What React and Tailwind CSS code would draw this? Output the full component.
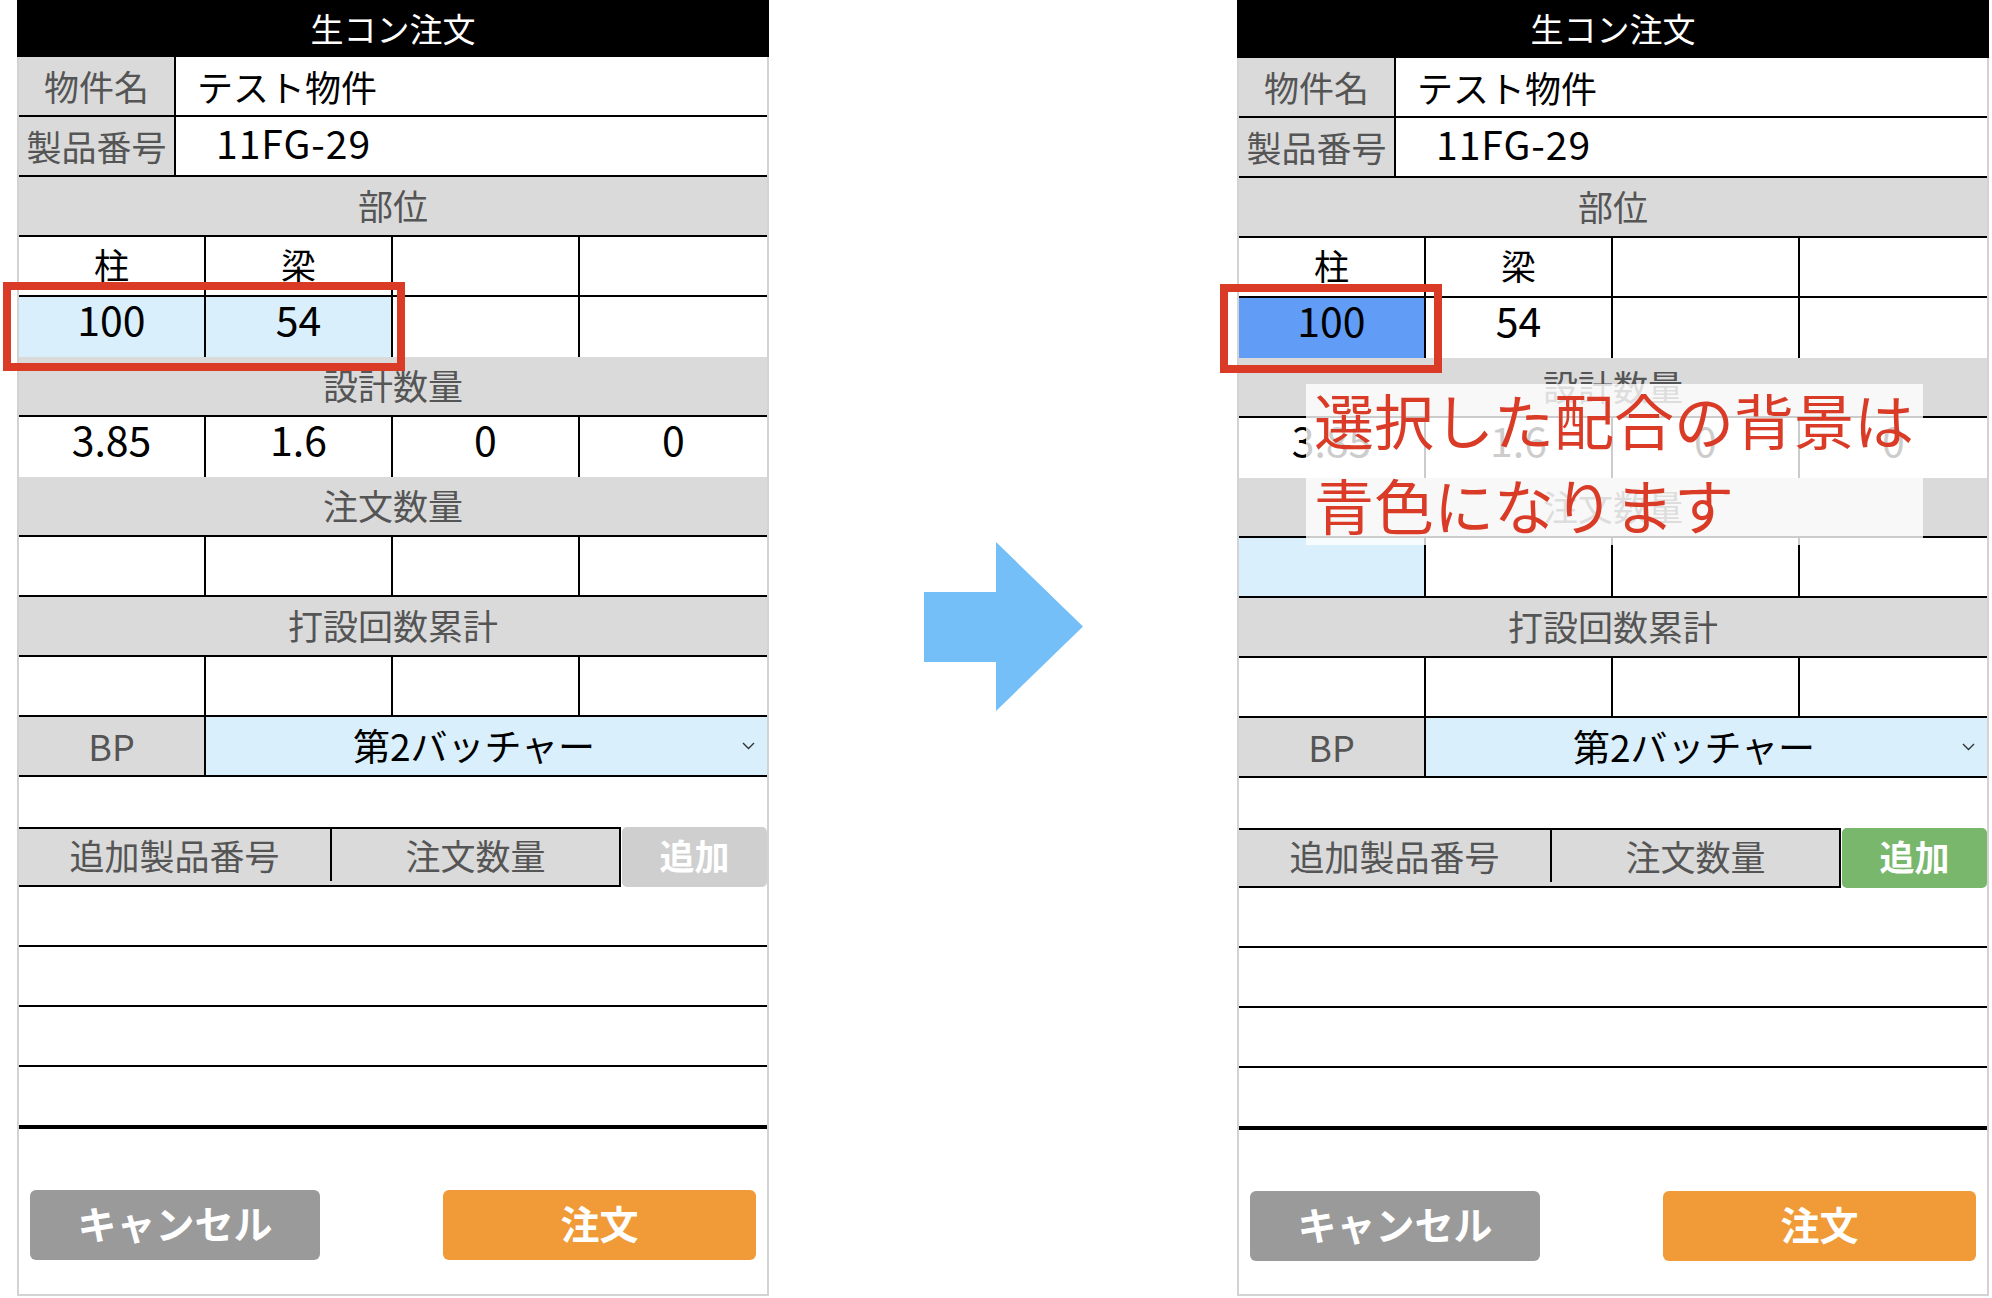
import React from "react";

const font = "font-['Noto_Sans_CJK_JP','Noto_Sans',sans-serif]";
const gray = "bg-[#dadada]";
const lightBlue = "bg-[#d9effc]";

function InfoRow({ label, value, valuePad }) {
  return (
    <div className="flex h-[60px] border-b-2 border-black">
      <div className={`flex w-[157px] items-center justify-center border-r-2 border-black ${gray} text-[35px] text-[#555]`}>
        {label}
      </div>
      <div className={`flex flex-1 items-center bg-white text-black ${valuePad}`}>{value}</div>
    </div>
  );
}

function SectionHeader({ title }) {
  return (
    <div className={`flex h-[60px] items-center justify-center border-b-2 border-black ${gray} pb-[2px] text-[35px] text-[#555]`}>
      {title}
    </div>
  );
}

function GridRow({ cells = [], bgs = [], textSize = "text-[41px]", shift = "-top-[9px]" }) {
  return (
    <div className="grid h-[60px] grid-cols-4 border-b-2 border-black">
      {[0, 1, 2, 3].map((i) => (
        <div
          key={i}
          className={`flex items-center justify-center text-black ${textSize} ${bgs[i] || "bg-white"} ${
            i < 3 ? "border-r-2 border-black" : ""
          }`}
        >
          {cells[i] && <span className={`relative ${shift}`}>{cells[i]}</span>}
        </div>
      ))}
    </div>
  );
}

function Panel({ after }) {
  return (
    <div className={`flex h-[1296px] w-[752px] flex-col ${font}`}>
      <div
        className={`flex ${after ? "h-[58px]" : "h-[57px]"} items-center justify-center bg-black text-[33px] text-white`}
      >
        生コン注文
      </div>
      <div className="flex flex-1 flex-col border-x-2 border-b-2 border-[#d3d3d3] bg-white">
        <InfoRow label="物件名" value={<span className="text-[36px]">テスト物件</span>} valuePad="pl-[21px]" />
        <InfoRow
          label="製品番号"
          value={<span className="text-[39px] tracking-[1px]">11FG-29</span>}
          valuePad="pl-[40px] pb-[7px]"
        />
        <SectionHeader title="部位" />
        <GridRow cells={["柱", "梁"]} textSize="text-[35px]" shift="-top-[2px]" />
        <GridRow
          cells={["100", "54"]}
          bgs={after ? ["bg-[#619cf7]"] : [lightBlue, lightBlue]}
        />
        <SectionHeader title="設計数量" />
        <GridRow cells={["3.85", "1.6", "0", "0"]} />
        <SectionHeader title="注文数量" />
        <GridRow bgs={after ? [lightBlue] : []} />
        <SectionHeader title="打設回数累計" />
        <GridRow />
        <div className="flex h-[60px] border-b-2 border-black">
          <div className={`flex w-[187px] items-center justify-center border-r-2 border-black ${gray} pb-[3px] text-[36px] text-[#555]`}>
            BP
          </div>
          <div className={`flex flex-1 items-center ${lightBlue}`}>
            <span className="flex-1 text-center text-[37px] text-black">第2バッチャー</span>
            <svg className="mr-[12px]" width="13" height="8" viewBox="0 0 13 8">
              <polyline points="1,1 6.5,6.5 12,1" fill="none" stroke="#333" strokeWidth="1.4" />
            </svg>
          </div>
        </div>

        <div className="h-[50px]" />
        <div className="flex h-[60px]">
          <div className={`flex w-[602px] border-y-2 border-r-2 border-black ${gray} pb-[4px] text-[35px] text-[#555]`}>
            <div className="flex w-[313px] items-center justify-center border-r-2 border-black">追加製品番号</div>
            <div className="flex flex-1 items-center justify-center">注文数量</div>
          </div>
          <div
            className={`ml-[1px] flex flex-1 items-center justify-center rounded-[5px] pb-[3px] text-[35px] font-bold text-white ${
              after ? "bg-[#78b76c]" : "bg-[#cfcfcf]"
            }`}
          >
            追加
          </div>
        </div>
        <div className="h-[60px] border-b-2 border-black" />
        <div className="h-[60px] border-b-2 border-black" />
        <div className="h-[60px] border-b-2 border-black" />
        <div className="h-[62px] border-b-4 border-black" />

        <div className="mt-[61px] flex h-[70px] px-[11px]">
          <button
            type="button"
            className="flex w-[290px] items-center justify-center rounded-[6px] bg-[#9a9a9a] pb-[5px] text-[39px] font-bold text-white"
          >
            キャンセル
          </button>
          <button
            type="button"
            className="ml-auto flex w-[313px] items-center justify-center rounded-[6px] bg-[#f09b37] pb-[5px] text-[39px] font-bold text-white"
          >
            注文
          </button>
        </div>
      </div>
    </div>
  );
}

export default function App() {
  return (
    <div className={`relative flex h-[1298px] w-[1992px] overflow-hidden bg-white pl-[17px] ${font}`}>
      <Panel />
      <div className="flex w-[468px] justify-center pt-[542px]">
        <svg width="159" height="169" viewBox="0 0 159 169">
          <polygon points="0,50 72,50 72,0 159,84.5 72,169 72,120 0,120" fill="#74bff8" />
        </svg>
      </div>
      <Panel after />

      {/* red highlight boxes */}
      <div className="absolute left-[3px] top-[282px] h-[89px] w-[402px] border-[8px] border-[#d93b27]" />
      <div className="absolute left-[1220px] top-[284px] h-[89px] w-[222px] border-[8px] border-[#d93b27]" />

      {/* annotation */}
      <div className="absolute left-[1306px] top-[384px] h-[161px] w-[617px] bg-white/80 pl-[8px] text-[60px] leading-[85px] text-[#d93b27]">
        <div className="-mt-[8px]">選択した配合の背景は</div>
        <div>青色になります</div>
      </div>
    </div>
  );
}
